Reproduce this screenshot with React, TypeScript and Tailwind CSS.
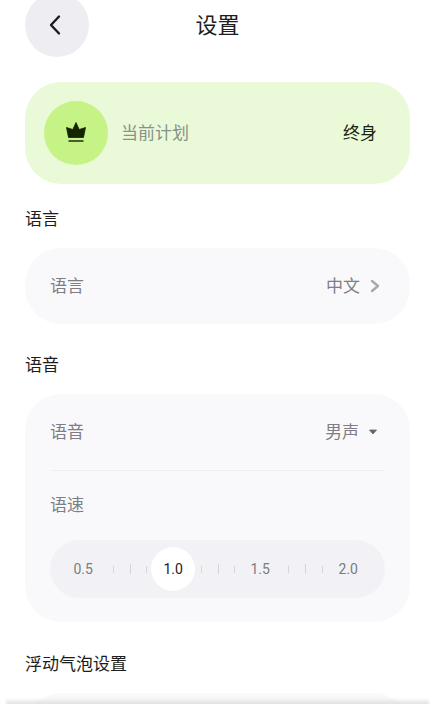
const font = { fontFamily: '"Noto Sans CJK SC", "Roboto", sans-serif' };
const numFont = { fontFamily: '"Roboto", sans-serif' };

function Ticks() {
  return (
    <div className="flex items-center gap-[15.6px]">
      <div className="h-[7px] w-px bg-[#d6d6da]" />
      <div className="h-[10px] w-px bg-[#d6d6da]" />
      <div className="h-[7px] w-px bg-[#d6d6da]" />
    </div>
  );
}

function SectionTitle({ children, className }: { children: React.ReactNode; className: string }) {
  return <div className={`px-[25px] text-[17px] leading-[24px] text-[#1d1d20] ${className}`}>{children}</div>;
}

export default function App() {
  return (
    <div className="relative h-[704px] w-[435px] overflow-hidden bg-white" style={font}>
      <div className="relative -mt-[7px] flex h-[64px] items-center px-[25px]">
        <button className="flex h-[64px] w-[64px] items-center justify-center rounded-full bg-[#eeeef2]">
          <svg width="24" height="24" viewBox="0 0 24 24" fill="none" stroke="#1d1d20" strokeWidth="2.4" strokeLinecap="round" strokeLinejoin="round" className="-translate-x-[2px]">
            <path d="M16 3.5 L8 12 L16 20.5" />
          </svg>
        </button>
        <div className="flex-1 pb-[4px] pr-[64px] text-center text-[22px] leading-[30px] text-[#1d1d20]">设置</div>
      </div>

      <div className="mx-[25px] mt-[25px] flex h-[102px] items-center rounded-[36px] bg-[#eafad9] pl-[19px] pr-[33px]">
        <div className="flex h-[64px] w-[64px] items-center justify-center rounded-full bg-[#c5f385]">
          <svg width="24" height="24" viewBox="0 0 24 24" fill="#142400">
            <path d="M12 1.5 L15.2 8.5 L21.5 6.5 L19.5 16.5 L4.5 16.5 L2.5 6.5 L8.8 8.5 Z" stroke="#142400" strokeWidth="0.8" strokeLinejoin="round" />
            <rect x="4.5" y="19" width="15" height="2" fill="#4b5a30" />
          </svg>
        </div>
        <div className="ml-[13px] flex-1 pb-[2px] text-[17px] leading-[24px] text-[#88918a]">当前计划</div>
        <div className="pb-[2px] text-[17px] leading-[24px] text-[#1a2410]">终身</div>
      </div>

      <SectionTitle className="mt-[22px]">语言</SectionTitle>
      <div className="mx-[25px] mt-[18px] flex h-[76px] items-center justify-between rounded-[36px] bg-[#f9f9fb] pb-[2px] pl-[25px] pr-[29px] text-[17px] text-[#7e7e84]">
        <span>语言</span>
        <div className="flex items-center gap-[9px]">
          <span>中文</span>
          <svg width="12" height="14" viewBox="0 0 12 14" fill="none" stroke="#a8a8ad" strokeWidth="2.4" strokeLinecap="round" strokeLinejoin="round" className="translate-y-px">
            <path d="M3 2 L9 7 L3 12" />
          </svg>
        </div>
      </div>

      <SectionTitle className="mt-[28px]">语音</SectionTitle>
      <div className="mx-[25px] mt-[18px] h-[228px] rounded-[36px] bg-[#f9f9fb] px-[25px] text-[17px] text-[#7e7e84]">
        <div className="flex h-[77px] items-center justify-between border-b border-[#efeff2] pb-[2px] pr-[8px]">
          <span>语音</span>
          <div className="flex items-center gap-[10px]">
            <span>男声</span>
            <svg width="8" height="6" viewBox="0 0 8 6" fill="#66666c" className="translate-y-px">
              <path d="M0.5 1 H7.5 L4 5 Z" stroke="#66666c" strokeWidth="0.8" strokeLinejoin="round" />
            </svg>
          </div>
        </div>
        <div className="mt-[21px] leading-[24px]">语速</div>
        <div className="mt-[24px] flex h-[58px] items-center rounded-[29px] bg-[#f2f2f6] text-[14px] text-[#7b7b80]" style={numFont}>
          <span className="ml-[23.5px] w-[21px]">0.5</span>
          <div className="ml-[18.5px]"><Ticks /></div>
          <div className="ml-[4px] flex h-[44px] w-[44px] items-center justify-center rounded-full bg-white text-[#1d1d20]">1.0</div>
          <div className="ml-[6px]"><Ticks /></div>
          <span className="ml-[15px] w-[21px]">1.5</span>
          <div className="ml-[17px]"><Ticks /></div>
          <span className="ml-[16px] w-[21px]">2.0</span>
        </div>
      </div>

      <SectionTitle className="mt-[29px]">浮动气泡设置</SectionTitle>
      <div className="mx-[25px] mt-[18px] h-[76px] rounded-[36px] bg-[#f9f9fb]" />

      <div className="absolute inset-x-[6px] -bottom-[1px] h-[7px] bg-gradient-to-b from-transparent to-[#dcdcdc] blur-[1px]" />
    </div>
  );
}
